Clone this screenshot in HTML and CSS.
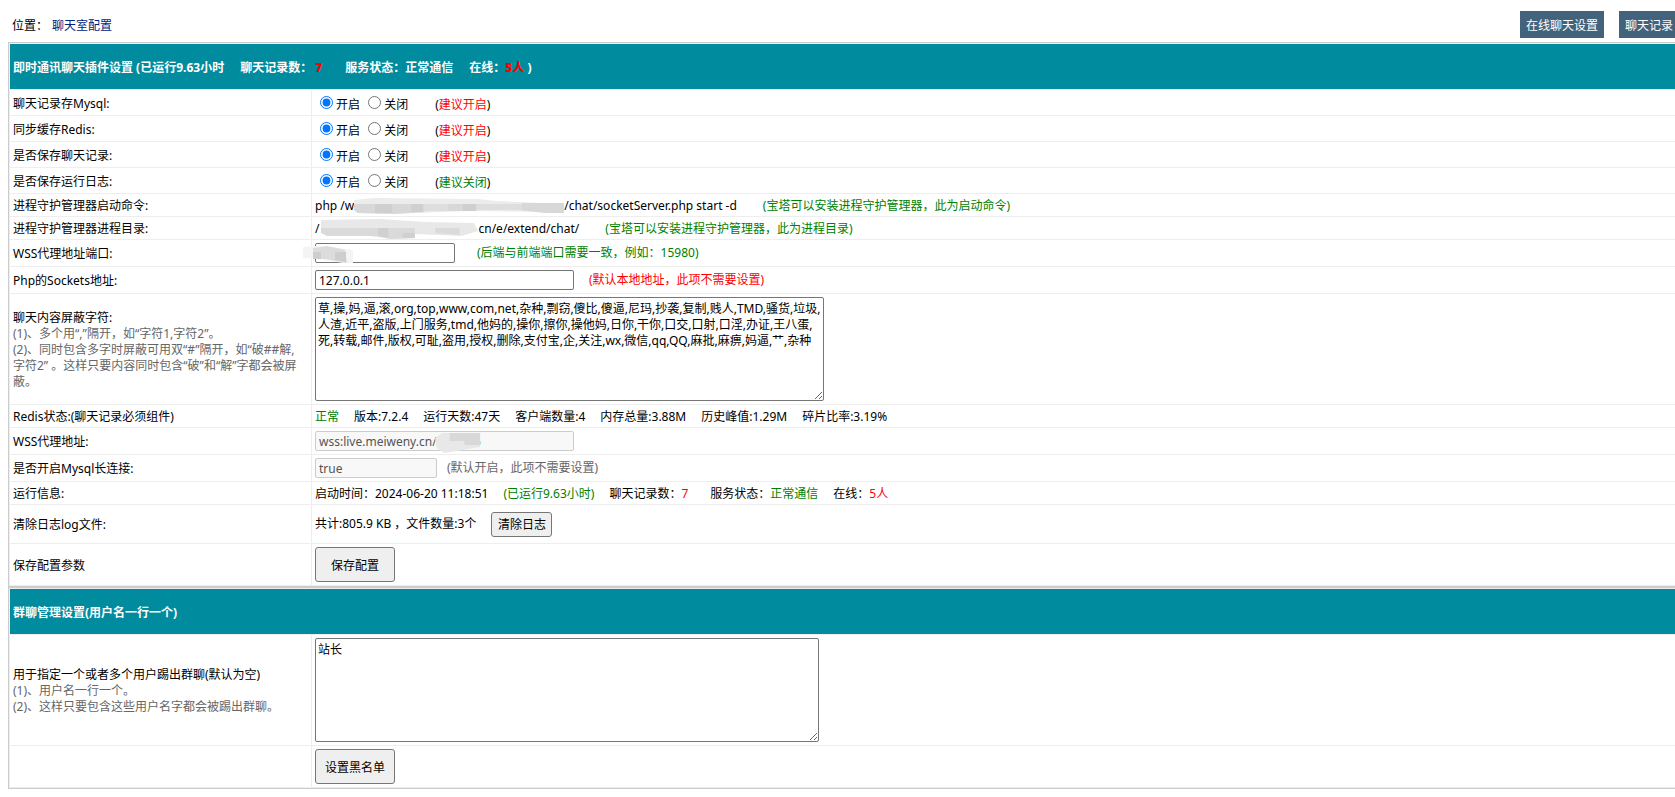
FILE: index.html
```html
<!DOCTYPE html>
<html lang="zh-CN">
<head>
<meta charset="utf-8">
<title>聊天室配置</title>
<link rel="stylesheet" href="styles.css">
</head>
<body>
<header class="topbar">
  <div class="crumbs">位置：<a href="#">聊天室配置</a></div>
  <nav class="actions"><button type="button" class="nav-btn">在线聊天设置</button><button type="button" class="nav-btn">聊天记录</button></nav>
</header>
<form class="page">
<table class="grid">
  <colgroup><col class="col-label"><col></colgroup>
  <thead><tr><th colspan="2"><div class="line head"><span>即时通讯聊天插件设置 (已运行9.63小时</span><span>聊天记录数： <b class="red">7</b></span><span class="wide">服务状态：正常通信</span><span>在线：<b class="red">5人</b> )</span></div></th></tr></thead>
  <tbody>
  <tr><td class="label">聊天记录存Mysql:</td><td class="radios"><label><input type="radio" name="mysql" checked>开启</label> <label><input type="radio" name="mysql">关闭</label><span class="tip">(<span class="red">建议开启</span>)</span></td></tr>
  <tr><td class="label">同步缓存Redis:</td><td class="radios"><label><input type="radio" name="redis" checked>开启</label> <label><input type="radio" name="redis">关闭</label><span class="tip">(<span class="red">建议开启</span>)</span></td></tr>
  <tr><td class="label">是否保存聊天记录:</td><td class="radios"><label><input type="radio" name="record" checked>开启</label> <label><input type="radio" name="record">关闭</label><span class="tip">(<span class="red">建议开启</span>)</span></td></tr>
  <tr><td class="label">是否保存运行日志:</td><td class="radios"><label><input type="radio" name="log" checked>开启</label> <label><input type="radio" name="log">关闭</label><span class="tip">(<span class="green">建议关闭</span>)</span></td></tr>
  <tr><td class="label">进程守护管理器启动命令:</td><td class="text"><div class="line cmd"><span class="path">php /w<svg class="mask" width="210" height="16" viewBox="0 0 220 16" preserveAspectRatio="none"><path fill="#ececec" d="M0 2 20 0 130 1 150 3 220 6V14L120 13 40 16 4 15 0 12z"/><path fill="#d8d8d8" d="M0 6H74V14L42 16 4 15 0 12zM98 6H128V13H98zM176 5H220V15L200 15 172 12z"/><path fill="#dedede" d="M74 6H98V13H74zM128 6H176V12H128z"/><path fill="#cfcfcf" d="M22 6H40V15H22zM60 6H72V14H60zM114 6H128V13H114z"/></svg>/chat/socketServer.php start -d</span><span class="green">(宝塔可以安装进程守护管理器，此为启动命令)</span></div></td></tr>
  <tr><td class="label">进程守护管理器进程目录:</td><td class="text"><div class="line cmd"><span class="path">/<svg class="mask" width="159" height="20" viewBox="0 0 156 20" preserveAspectRatio="none"><path fill="#e8e8e8" d="M2 1 60 0 104 3 152 4 156 12 140 17 94 15V19L70 20 50 17 8 17 2 12z"/><path fill="#dadada" d="M2 9H94V19L70 20 58 17H8L2 14zM114 9H138V16L114 14z"/><path fill="#d0d0d0" d="M58 9H68V19L58 17zM82 14H94V19H82z"/></svg>cn/e/extend/chat/</span><span class="green">(宝塔可以安装进程守护管理器，此为进程目录)</span></div></td></tr>
  <tr><td class="label"><label for="port">WSS代理地址端口:</label></td><td><div class="line port"><span class="masked"><input id="port" type="text" class="w-port"><svg class="cover cover-port" width="50" height="18" viewBox="0 0 50 18"><path fill="#f4f4f4" d="M0 1 12 0 30 1 50 4V17H40L22 14 10 12H0z"/><path fill="#dcdcdc" d="M10 2 24 0 42 4 44 17 22 13H10z"/><path fill="#cecece" d="M10 6H18V13H10zM32 6H43V16L32 14z"/></svg></span><span class="green">(后端与前端端口需要一致，例如：15980)</span></div></td></tr>
  <tr><td class="label"><label for="sock">Php的Sockets地址:</label></td><td><div class="line"><input id="sock" type="text" class="w-long" value="127.0.0.1"><span class="red">(默认本地地址，此项不需要设置)</span></div></td></tr>
  <tr><td class="label"><label for="words">聊天内容屏蔽字符:</label><p class="note">(1)、多个用“,”隔开，如“字符1,字符2”。<br>(2)、同时包含多字时屏蔽可用双“#”隔开，如“破##解,字符2” 。这样只要内容同时包含“破”和“解”字都会被屏蔽。</p></td><td><textarea id="words" class="w-words">草,操,妈,逼,滚,org,top,www,com,net,杂种,剽窃,傻比,傻逼,尼玛,抄袭,复制,贱人,TMD,骚货,垃圾,人渣,近平,盗版,上门服务,tmd,他妈的,操你,擦你,操他妈,日你,干你,口交,口射,口淫,办证,王八蛋,死,转载,邮件,版权,可耻,盗用,授权,删除,支付宝,企,关注,wx,微信,qq,QQ,麻批,麻痹,妈逼,艹,杂种</textarea></td></tr>
  <tr><td class="label">Redis状态:(聊天记录必须组件)</td><td class="text"><div class="line"><span class="green">正常</span><span>版本:7.2.4</span><span>运行天数:47天</span><span>客户端数量:4</span><span>内存总量:3.88M</span><span>历史峰值:1.29M</span><span>碎片比率:3.19%</span></div></td></tr>
  <tr><td class="label"><label for="wss">WSS代理地址:</label></td><td><div class="line"><span class="masked"><input id="wss" type="text" class="w-long" value="wss:live.meiweny.cn/&nbsp;&nbsp;&nbsp;&nbsp;&nbsp;&nbsp;&nbsp;&nbsp;&nbsp;&nbsp;&nbsp;&nbsp;5" disabled><svg class="cover cover-wss" width="46" height="22" viewBox="0 0 50 22" preserveAspectRatio="none"><path fill="#e8e8e8" d="M0 6 8 1 49 1V15L30 18 10 21 2 16z"/><path fill="#d8d8d8" d="M16 1H49V13H32V9H16z"/></svg></span></div></td></tr>
  <tr><td class="label"><label for="long">是否开启Mysql长连接:</label></td><td><div class="line near"><input id="long" type="text" class="w-short" value="true" disabled><span class="gray">(默认开启，此项不需要设置)</span></div></td></tr>
  <tr><td class="label">运行信息:</td><td class="text"><div class="line"><span>启动时间：2024-06-20 11:18:51</span><span class="green">(已运行9.63小时)</span><span>聊天记录数：<span class="red">7</span></span><span class="wide">服务状态：<span class="green">正常通信</span></span><span>在线：<span class="red">5人</span></span></div></td></tr>
  <tr><td class="label">清除日志log文件:</td><td class="roomy"><div class="line"><span>共计:805.9 KB ，文件数量:3个</span><button type="button" class="btn-sm">清除日志</button></div></td></tr>
  <tr><td class="label">保存配置参数</td><td><button type="button" class="btn">保存配置</button></td></tr>
  </tbody>
</table>
<table class="grid">
  <colgroup><col class="col-label"><col></colgroup>
  <thead><tr><th colspan="2">群聊管理设置(用户名一行一个)</th></tr></thead>
  <tbody>
  <tr><td class="label"><label for="kick">用于指定一个或者多个用户踢出群聊(默认为空)</label><p class="note">(1)、用户名一行一个。<br>(2)、这样只要包含这些用户名字都会被踢出群聊。</p></td><td><textarea id="kick" class="w-kick">站长</textarea></td></tr>
  <tr><td class="label"></td><td><button type="button" class="btn">设置黑名单</button></td></tr>
  </tbody>
</table>
</form>
</body>
</html>
```
FILE: styles.css
```css
* { box-sizing: border-box; }
html { overflow-x: hidden; }
body { margin: 0 -4px 0 8px; background: #fff; }
body, input, textarea, button {
  font-family: "Noto Sans", "Noto Sans CJK SC", sans-serif;
  font-size: 12px;
  line-height: 16px;
  color: #000;
}
.topbar { display: flex; justify-content: space-between; align-items: center; padding: 11px 0 4px 4px; }
.crumbs { padding-top: 2px; }
.crumbs a { color: #002280; text-decoration: none; margin-left: 4px; }
.actions { display: flex; gap: 15px; }
.nav-btn { border: 0; background: #42637b; color: #fff; padding: 7px 6px 4px; height: 27px; }
.grid { width: 100%; border: 1px solid #ccc; border-collapse: separate; border-spacing: 0; table-layout: fixed; }
.col-label { width: 303px; }
th { height: 47px; padding: 5px 3px 3px; text-align: left; background: #008c9e; color: #fff; border: 1px solid #eee; border-right: 0; }
td { padding: 3px; border-bottom: 1px solid #eee; vertical-align: middle; }
.label { padding: 4px 3px 2px; border-left: 1px solid #eee; border-right: 1px solid #eee; }
.text { padding: 4px 3px 2px; }
.note { margin: 0; padding-right: 8px; color: #666; }
.line { display: flex; align-items: center; gap: 15px; }
.line .wide { margin-left: 7px; }
.head { gap: 16px; }
.cmd { gap: 26px; height: 16px; }
.port { gap: 22px; }
.near { gap: 10px; }
.path { display: flex; align-items: center; }
.roomy { height: 39px; }
.radios { height: 26px; padding: 0 3px; }
.radios input { margin: 3px 3px 0 5px; }
.tip { margin-left: 27px; }
.red { color: #f00; }
.green { color: #008000; }
.gray { color: #666; }
input[type="text"] { height: 20px; padding: 1px 3px; border: 1px solid #767676; border-radius: 2px; background: #fff; }
input[type="text"]:disabled { color: #545454; border-color: #ccc; background: #f8f8f8; }
.w-port { width: 140px; }
.w-long { width: 259px; }
.w-short { width: 122px; }
textarea { display: block; height: 104px; padding: 3px 2px; border: 1px solid #767676; border-radius: 2px; }
.w-words { width: 509px; }
.w-kick { width: 504px; }
.btn, .btn-sm { display: block; border: 1px solid #767676; border-radius: 3px; background: #efefef; padding: 2px 0 0; }
.btn { width: 80px; height: 35px; }
.btn-sm { width: 61px; height: 25px; }
.masked { position: relative; display: flex; }
.cover { position: absolute; }
.cover-port { left: -12px; top: 3px; }
.cover-wss { left: 120px; top: 1px; }
```
